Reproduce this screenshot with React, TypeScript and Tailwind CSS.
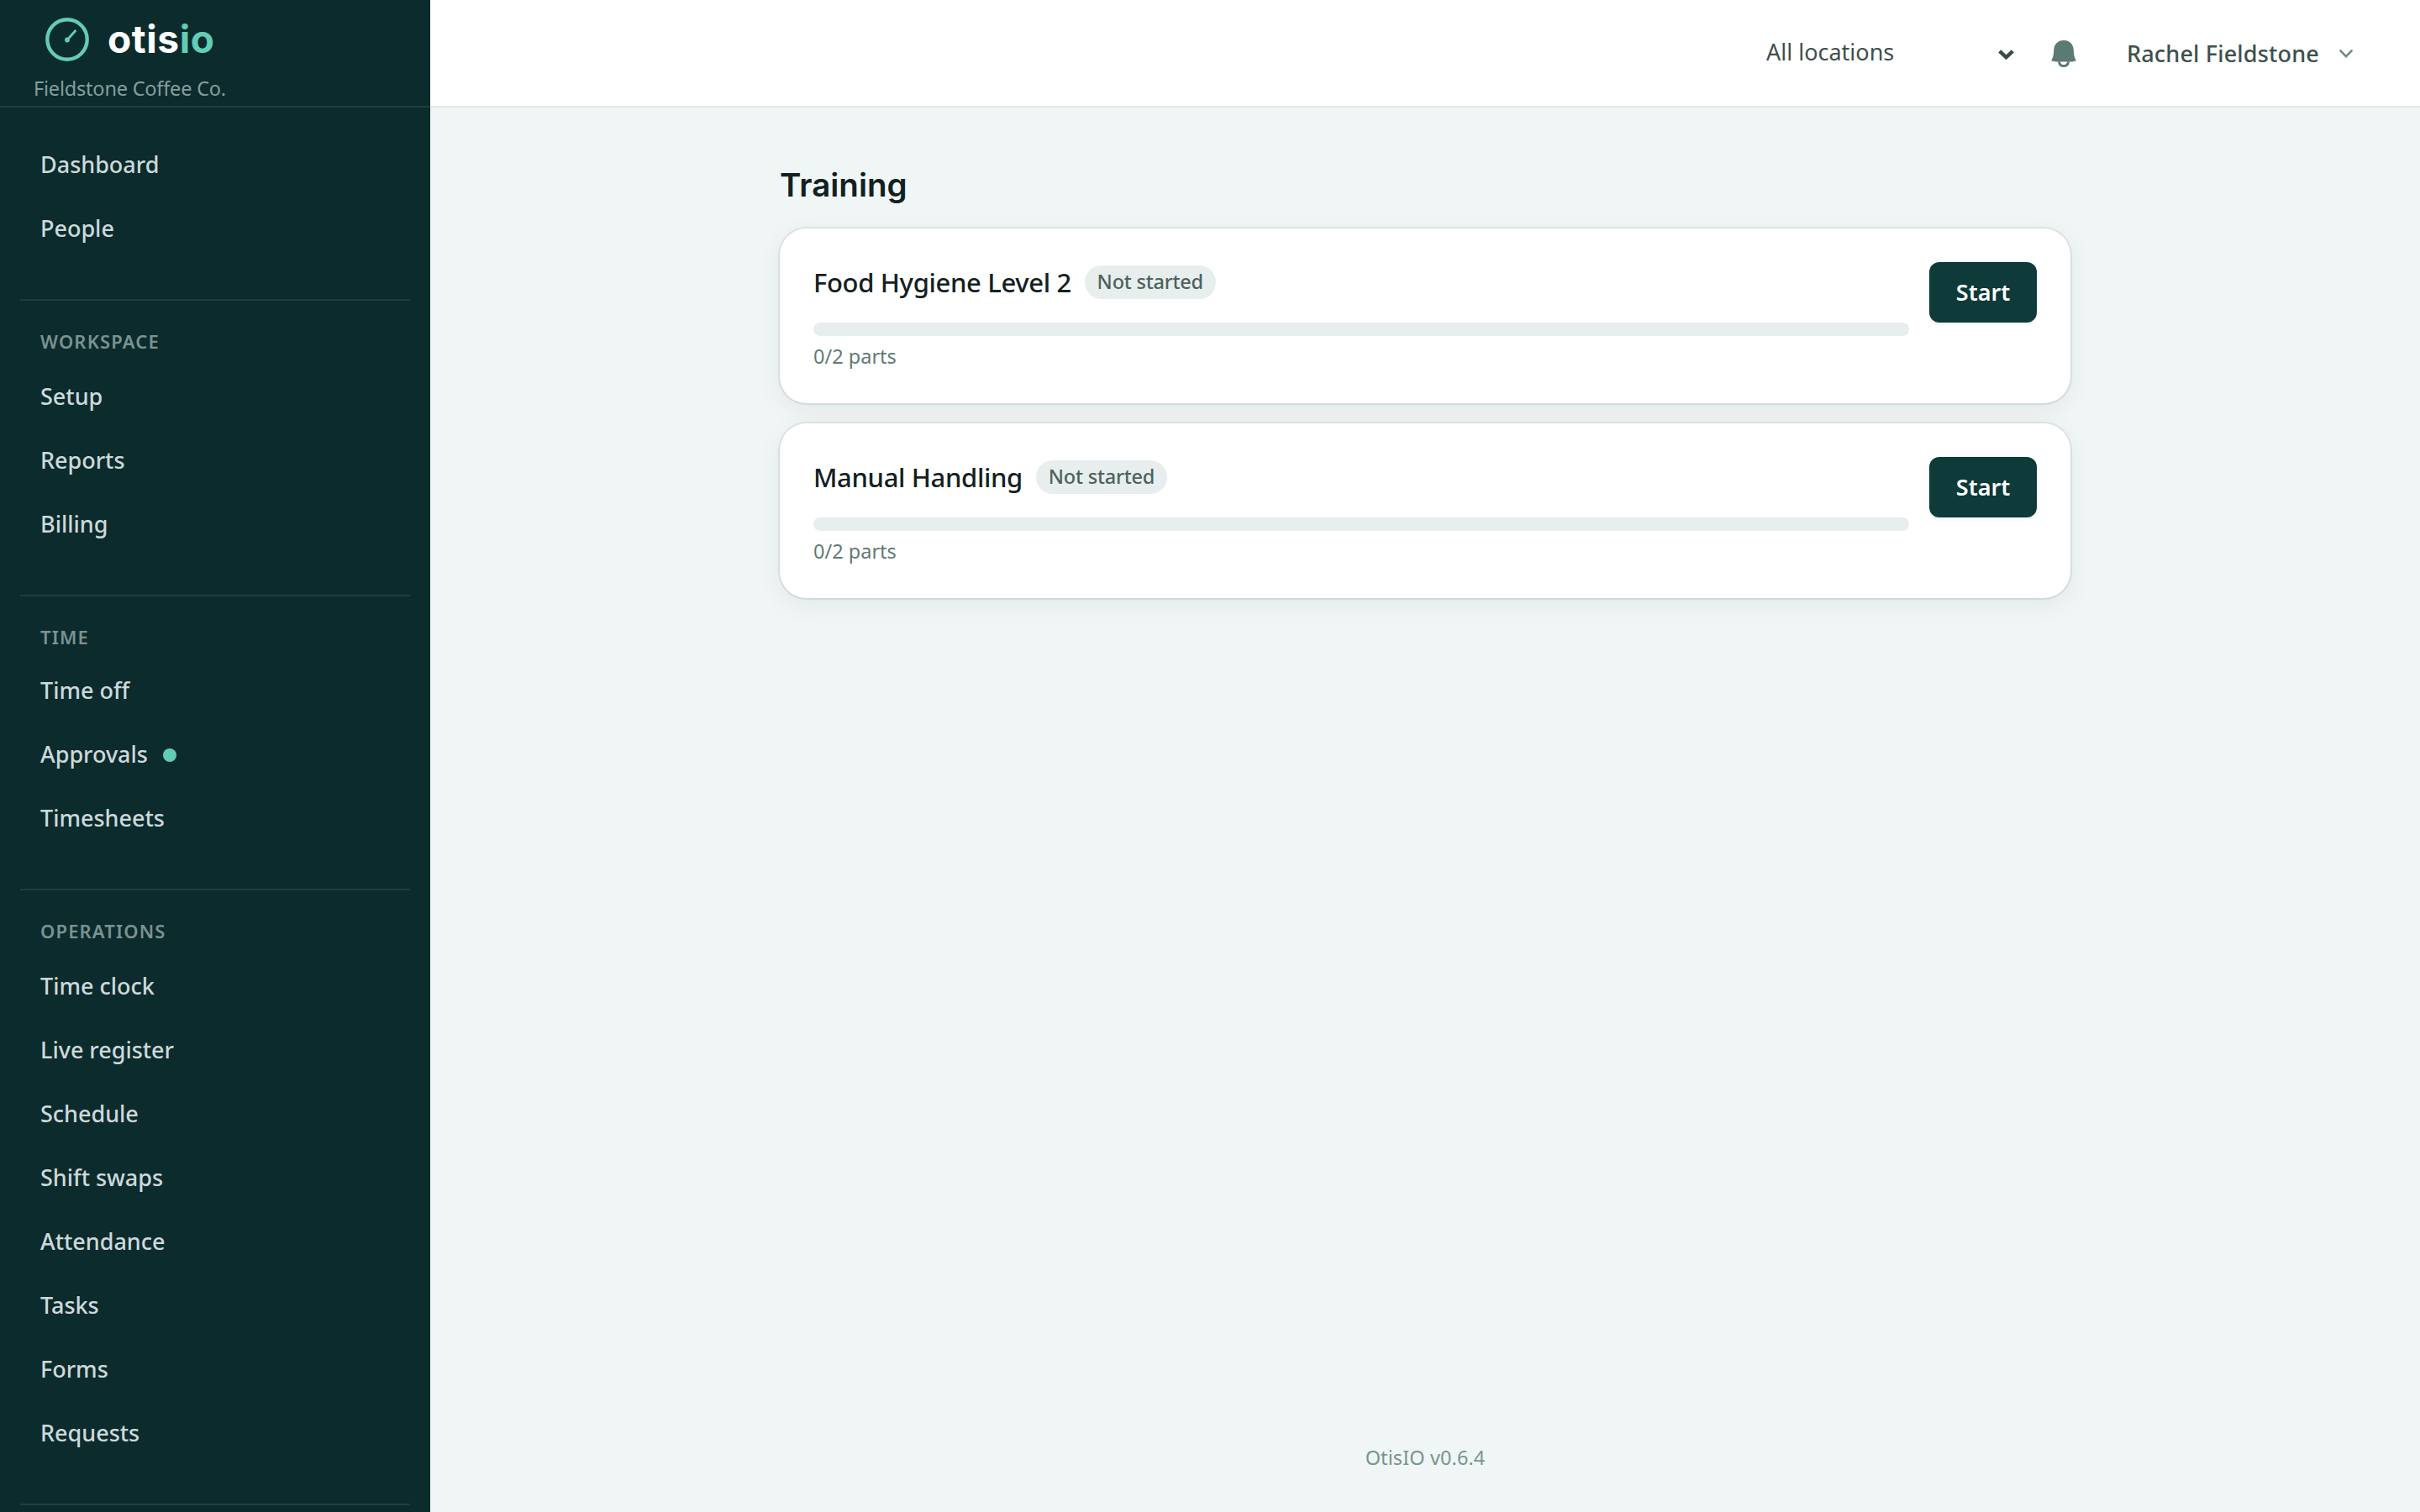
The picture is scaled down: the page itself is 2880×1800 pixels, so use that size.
type NavItem = { label: string; dot?: boolean }
type NavSection = { title?: string; items: NavItem[] }

const sections: NavSection[] = [
  { items: [{ label: "Dashboard" }, { label: "People" }] },
  {
    title: "Workspace",
    items: [{ label: "Setup" }, { label: "Reports" }, { label: "Billing" }],
  },
  {
    title: "Time",
    items: [{ label: "Time off" }, { label: "Approvals", dot: true }, { label: "Timesheets" }],
  },
  {
    title: "Operations",
    items: [
      { label: "Time clock" },
      { label: "Live register" },
      { label: "Schedule" },
      { label: "Shift swaps" },
      { label: "Attendance" },
      { label: "Tasks" },
      { label: "Forms" },
      { label: "Requests" },
    ],
  },
]

const courses = [
  { name: "Food Hygiene Level 2", done: 0, total: 2 },
  { name: "Manual Handling", done: 0, total: 2 },
]

function LogoMark() {
  return (
    <svg className="size-[52px]" viewBox="0 0 52 52" fill="none" stroke="#63ccb5">
      <circle cx="26" cy="26" r="23.7" strokeWidth="4.4" />
      <path d="M26 26.5 36.3 15" strokeWidth="2.8" />
      <circle cx="26" cy="26.5" r="2.9" fill="#63ccb5" stroke="none" />
    </svg>
  )
}

function BellIcon() {
  return (
    <svg className="h-8 w-[30px]" viewBox="0 0 30 32" fill="none">
      <path
        d="M15 0C8 0 3.4 4.8 3.2 12 3.1 17 2.4 20 .2 24.3c2.4.9 5 1.2 8 1.3h13.6c3 0 5.6-.4 8-1.3C27.6 20 26.9 17 26.8 12 26.6 4.8 22 0 15 0Z"
        fill="#5a7a73"
      />
      <path d="M9.4 25.4c.6 3.2 2.8 5.1 5.6 5.1s5-1.9 5.6-5.1" stroke="#5a7a73" strokeWidth="3" />
      <path d="M11.2 25.9h7.6c-.5 2-1.9 3-3.8 3s-3.3-1-3.8-3Z" fill="#fff" />
    </svg>
  )
}

function Sidebar() {
  return (
    <aside className="flex h-screen w-[512px] shrink-0 flex-col overflow-hidden bg-[#0c2b2c]">
      <div className="flex h-32 shrink-0 flex-col border-b-2 border-[#1f3e3e] pt-4">
        <div className="flex h-[62px] items-center gap-[22px] pl-[54px]">
          <LogoMark />
          <span className="pb-0.5 font-['Inter',sans-serif] text-[46px] leading-none font-bold tracking-[0.6px] text-white">
            otis<span className="text-[#63ccb5]">io</span>
          </span>
        </div>
        <p className="mt-2.5 pl-10 text-[23.5px] leading-[34px] tracking-[-0.2px] text-[#869d9c]">
          Fieldstone Coffee Co.
        </p>
      </div>

      <nav className="flex flex-col px-6 pt-[30px]">
        {sections.map((section, i) => (
          <div key={i} className="shrink-0 border-b-2 border-[#1f3e3e] pb-[46px]">
            {section.title && (
              <h2
                className={`px-6 pt-8 text-[22px] leading-8 font-semibold tracking-[1.15px] text-[#7b9292] uppercase ${
                  section.title === "Time" ? "mb-2.5" : "mb-3"
                }`}
              >
                {section.title}
              </h2>
            )}
            {section.items.map((item) => (
              <a
                key={item.label}
                className="flex h-[76px] items-center gap-[18px] px-6 text-[27px] font-medium tracking-[-0.02px] text-[#cdd9db]"
              >
                {item.label}
                {item.dot && <span className="mt-0.5 size-4 rounded-full bg-[#63ccb5]" />}
              </a>
            ))}
          </div>
        ))}
      </nav>
    </aside>
  )
}

function TopBar() {
  return (
    <header className="flex h-32 shrink-0 items-center justify-end border-b-2 border-[#dfe9e8] bg-white pr-20 text-[27px] text-[#3e4f4c]">
      <div className="flex w-[295px] items-center justify-between">
        <span className="pb-0.5">All locations</span>
        <svg className="mt-1 h-[13px] w-[19px]" viewBox="0 0 19 13" fill="none">
          <path d="M1.7 1.8 9.5 9.3l7.8-7.5" stroke="#3a4a47" strokeWidth="4.4" />
        </svg>
      </div>
      <div className="mt-0.5 mr-[60px] ml-11">
        <BellIcon />
      </div>
      <div className="flex w-[269px] items-center justify-between">
        <span className="pt-0.5 font-medium tracking-[0.18px]">Rachel Fieldstone</span>
        <svg className="mt-0.5 h-2.5 w-4" viewBox="0 0 16 10" fill="none">
          <path d="m1.4 1.4 6.6 6.8 6.6-6.8" stroke="#6a8e87" strokeWidth="2.6" strokeLinecap="round" />
        </svg>
      </div>
    </header>
  )
}

function CourseCard({ name, done, total }: { name: string; done: number; total: number }) {
  return (
    <div className="flex items-start gap-6 rounded-[32px] bg-white p-10 shadow-[0_0_0_2px_rgba(20,35,35,0.07),0_2px_4px_rgba(20,35,35,0.03),0_8px_32px_rgba(20,35,35,0.06)]">
      <div className="flex-1">
        <div className="flex h-12 items-center gap-4">
          <h3 className="text-[31px] font-medium tracking-[-0.35px] text-[#12211f]">{name}</h3>
          <span className="flex h-10 w-[156px] items-center justify-center rounded-full bg-[#e8eeed] text-[23.5px] font-medium tracking-[-0.2px] text-[#4c625e]">
            Not started
          </span>
        </div>
        <div className="mt-6 h-4 overflow-hidden rounded-full bg-[#e8eeed]">
          <div className="h-full bg-[#63ccb5]" style={{ width: `${(done / total) * 100}%` }} />
        </div>
        <p className="mt-2 text-[23.5px] leading-8 text-[#5f7b76]">
          {done}/{total} parts
        </p>
      </div>
      <button className="h-[72px] w-32 rounded-xl bg-[#0e3a3a] text-[27px] font-semibold text-white shadow-[0_2px_4px_rgba(0,0,0,0.06)]">
        Start
      </button>
    </div>
  )
}

export default function App() {
  return (
    <div className="flex h-screen w-full overflow-hidden bg-[#f0f6f6] font-['Noto_Sans','Open_Sans',sans-serif]">
      <Sidebar />
      <div className="flex flex-1 flex-col">
        <TopBar />
        <main className="mx-auto w-[1536px] flex-1 pt-16">
          <h1 className="mb-6 font-['Inter',sans-serif] text-[38.5px] leading-[56px] font-semibold text-[#12211f]">
            Training
          </h1>
          <div className="flex flex-col gap-6">
            {courses.map((course) => (
              <CourseCard key={course.name} {...course} />
            ))}
          </div>
        </main>
        <footer className="pb-[49px] text-center text-[23.5px] leading-8 tracking-[0.1px] text-[#78958f]">
          OtisIO v0.6.4
        </footer>
      </div>
    </div>
  )
}
